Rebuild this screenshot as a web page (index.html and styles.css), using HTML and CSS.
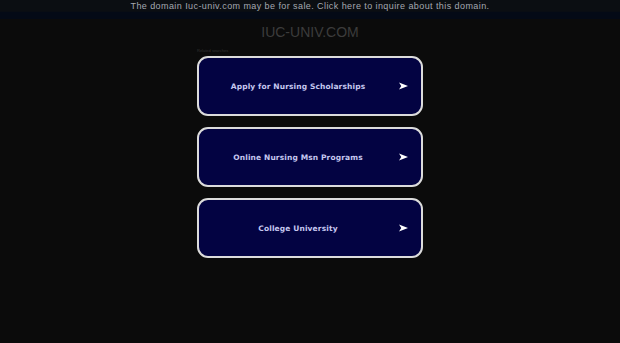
FILE: index.html
```html
<!DOCTYPE html>
<html lang="en">
<head>
    <meta charset="UTF-8">
    <title>iuc-univ.com</title>
    <link rel="stylesheet" href="styles.css">
</head>
<body>
    <div class="sale-bar">
        <a href="#">The domain Iuc-univ.com may be for sale. Click here to inquire about this domain.</a>
    </div>

    <div class="container">
        <h1 class="domain">IUC-UNIV.COM</h1>
        <div class="related">
            <p class="related-label">Related searches</p>
            <a class="link-box" href="#">
                <span>Apply for Nursing Scholarships</span>
                <svg class="arrow" viewBox="0 0 10 8" width="9" height="8"><path d="M0 0 L10 4 L0 8 L2.5 4 Z" fill="#fff"/></svg>
            </a>
            <a class="link-box" href="#">
                <span>Online Nursing Msn Programs</span>
                <svg class="arrow" viewBox="0 0 10 8" width="9" height="8"><path d="M0 0 L10 4 L0 8 L2.5 4 Z" fill="#fff"/></svg>
            </a>
            <a class="link-box" href="#">
                <span>College University</span>
                <svg class="arrow" viewBox="0 0 10 8" width="9" height="8"><path d="M0 0 L10 4 L0 8 L2.5 4 Z" fill="#fff"/></svg>
            </a>
        </div>
    </div>
</body>
</html>
```

FILE: styles.css
```css
body {
    margin: 0;
    padding: 0;
    background-color: #0b0b0b;
    font-family: "Liberation Sans", Arial, sans-serif;
}
.sale-bar {
    height: 19px;
    background: linear-gradient(to bottom, #0b0e12 0%, #0b0e12 60%, #040a16 62%, #040a16 100%);
    text-align: center;
}
.sale-bar a {
    display: block;
    padding-top: 1px;
    font-size: 9px;
    line-height: 11px;
    letter-spacing: 0.42px;
    color: #a4a8b0;
    text-decoration: none;
}
.container {
    width: 226px;
    margin: 0 auto;
}
.domain {
    margin: 5px 0 0 0;
    text-align: center;
    font-size: 14px;
    line-height: 16px;
    font-weight: normal;
    color: #3c3c3c;
}
.related-label {
    margin: 8px 0 2px 0;
    font-size: 4px;
    line-height: 6px;
    color: #333;
}
.link-box {
    display: flex;
    align-items: center;
    justify-content: center;
    position: relative;
    height: 56px;
    padding-right: 24px;
    margin-bottom: 11px;
    border: 2px solid #dcdcdc;
    border-radius: 11px;
    background-color: #030342;
    text-decoration: none;
}
.link-box span {
    font-family: "DejaVu Sans", Verdana, sans-serif;
    font-weight: bold;
    font-size: 7.5px;
    letter-spacing: 0.12px;
    color: #c6c8f0;
}
.arrow {
    position: absolute;
    right: 13px;
    top: 24px;
}
```
